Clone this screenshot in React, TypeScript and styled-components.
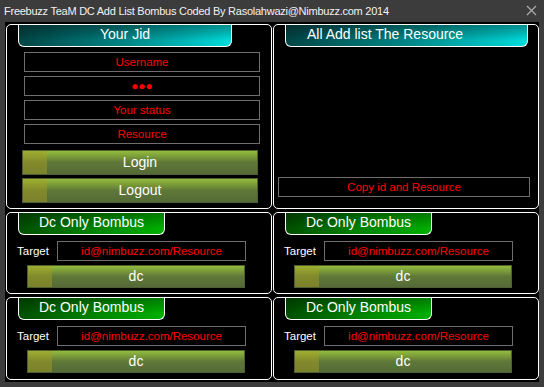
import React from 'react';
import styled, { createGlobalStyle } from 'styled-components';

const GlobalStyle = createGlobalStyle`
  html, body {
    margin: 0;
    padding: 0;
    background: #3c3c3c;
  }
  * {
    box-sizing: border-box;
  }
`;

const Window = styled.div`
  width: 544px;
  height: 387px;
  background: #3c3c3c;
  display: flex;
  flex-direction: column;
  font-family: 'Liberation Sans', Arial, sans-serif;
  overflow: hidden;
`;

const TitleBar = styled.div`
  height: 22px;
  display: flex;
  align-items: center;
  justify-content: space-between;
  padding: 0 7px 1px 4px;
  color: #f2f2f2;
  font-size: 11px;
  letter-spacing: -0.25px;
`;

const Body = styled.div`
  flex: 1;
  margin: 0 5px 5px;
  background: #000;
  display: grid;
  grid-template-columns: 266px 266px;
  grid-template-rows: 185px 82px 83px;
  column-gap: 1px;
  row-gap: 3px;
  padding: 2px 1px;
`;

const Panel = styled.div`
  border: 1px solid #ffffff;
  border-radius: 5px;
  display: flex;
  flex-direction: column;
  min-height: 0;
`;

const Tab = styled.div<{ $variant: 'teal' | 'green'; $width: number; $align?: 'left' | 'center' }>`
  margin-left: 11px;
  width: ${p => p.$width}px;
  height: 22px;
  flex: none;
  border: 1px solid #ffffff;
  border-top: none;
  border-radius: 0 0 6px 6px;
  color: #ffffff;
  font-size: 14px;
  line-height: 19px;
  text-align: ${p => p.$align ?? 'center'};
  padding-left: ${p => (p.$align === 'left' ? '21px' : '0')};
  background: ${p =>
    p.$variant === 'teal'
      ? 'linear-gradient(to bottom, rgba(0,0,0,0.35) 0%, rgba(0,0,0,0) 75%), linear-gradient(to right, #024545 0%, #008585 50%, #00dcdc 100%)'
      : 'linear-gradient(to bottom, rgba(0,0,0,0.3) 0%, rgba(0,0,0,0) 75%), linear-gradient(to right, #004f00 0%, #008200 50%, #00b000 100%)'};
`;

const Fields = styled.div`
  display: flex;
  flex-direction: column;
  gap: 4px;
  margin: 5px 0 0 17px;
  width: 236px;
`;

const Field = styled.div<{ $width?: number }>`
  width: ${p => (p.$width ? `${p.$width}px` : '100%')};
  height: 20px;
  border: 1px solid #6e6e6e;
  color: #ff0000;
  font-size: 11.5px;
  line-height: 18px;
  text-align: center;
  white-space: nowrap;
`;

const Dots = styled.span`
  font-size: 12px;
  letter-spacing: 0px;
  vertical-align: 0px;
`;

const Buttons = styled.div`
  display: flex;
  flex-direction: column;
  gap: 3px;
  margin: 6px 0 0 15px;
  width: 236px;
`;

const Button = styled.div<{ $width?: number; $height?: number }>`
  position: relative;
  width: ${p => (p.$width ? `${p.$width}px` : '100%')};
  height: ${p => p.$height ?? 25}px;
  border: 1px solid #4e5f33;
  background: linear-gradient(to bottom, #93bc3c 0%, #7d9e3a 22%, #5f7838 50%, #556a37 100%);
  color: #ffffff;
  font-size: 14px;
  line-height: ${p => (p.$height ?? 25) - 2}px;
  text-align: center;

  &::before {
    content: '';
    position: absolute;
    left: 0;
    top: 0;
    bottom: 0;
    width: 24px;
    background: rgba(170, 160, 30, 0.45);
  }

  span {
    position: relative;
  }
`;

const CopyBox = styled(Field)`
  margin: auto 0 11px 4px;
  width: 252px;
`;

const TargetRow = styled.div`
  display: flex;
  align-items: center;
  margin: 6px 0 0 10px;
`;

const Label = styled.div`
  width: 40px;
  color: #ffffff;
  font-size: 11.5px;
`;

const DcButtonWrap = styled.div`
  margin: 4px 0 0 20px;
`;

const CloseIcon = () => (
  <svg width="11" height="11" viewBox="0 0 11 11">
    <path d="M1 1 L10 10 M10 1 L1 10" stroke="#a8a8a8" strokeWidth="1.4" />
  </svg>
);

const DcPanel: React.FC = () => (
  <Panel>
    <Tab $variant="green" $width={147}>Dc Only Bombus</Tab>
    <TargetRow>
      <Label>Target</Label>
      <Field $width={189}>id@nimbuzz.com/Resource</Field>
    </TargetRow>
    <DcButtonWrap>
      <Button $width={218} $height={23}>
        <span>dc</span>
      </Button>
    </DcButtonWrap>
  </Panel>
);

const App: React.FC = () => {
  return (
    <>
      <GlobalStyle />
      <Window>
        <TitleBar>
          <span>Freebuzz TeaM DC Add List Bombus Coded By Rasolahwazi@Nimbuzz.com 2014</span>
          <CloseIcon />
        </TitleBar>
        <Body>
          <Panel>
            <Tab $variant="teal" $width={214}>Your Jid</Tab>
            <Fields>
              <Field>Username</Field>
              <Field>
                <Dots>●●●</Dots>
              </Field>
              <Field>Your status</Field>
              <Field>Resource</Field>
            </Fields>
            <Buttons>
              <Button>
                <span>Login</span>
              </Button>
              <Button>
                <span>Logout</span>
              </Button>
            </Buttons>
          </Panel>
          <Panel>
            <Tab $variant="teal" $width={243} $align="left">All Add list The Resource</Tab>
            <CopyBox>Copy id and Resource</CopyBox>
          </Panel>
          <DcPanel />
          <DcPanel />
          <DcPanel />
          <DcPanel />
        </Body>
      </Window>
    </>
  );
};

export default App;
